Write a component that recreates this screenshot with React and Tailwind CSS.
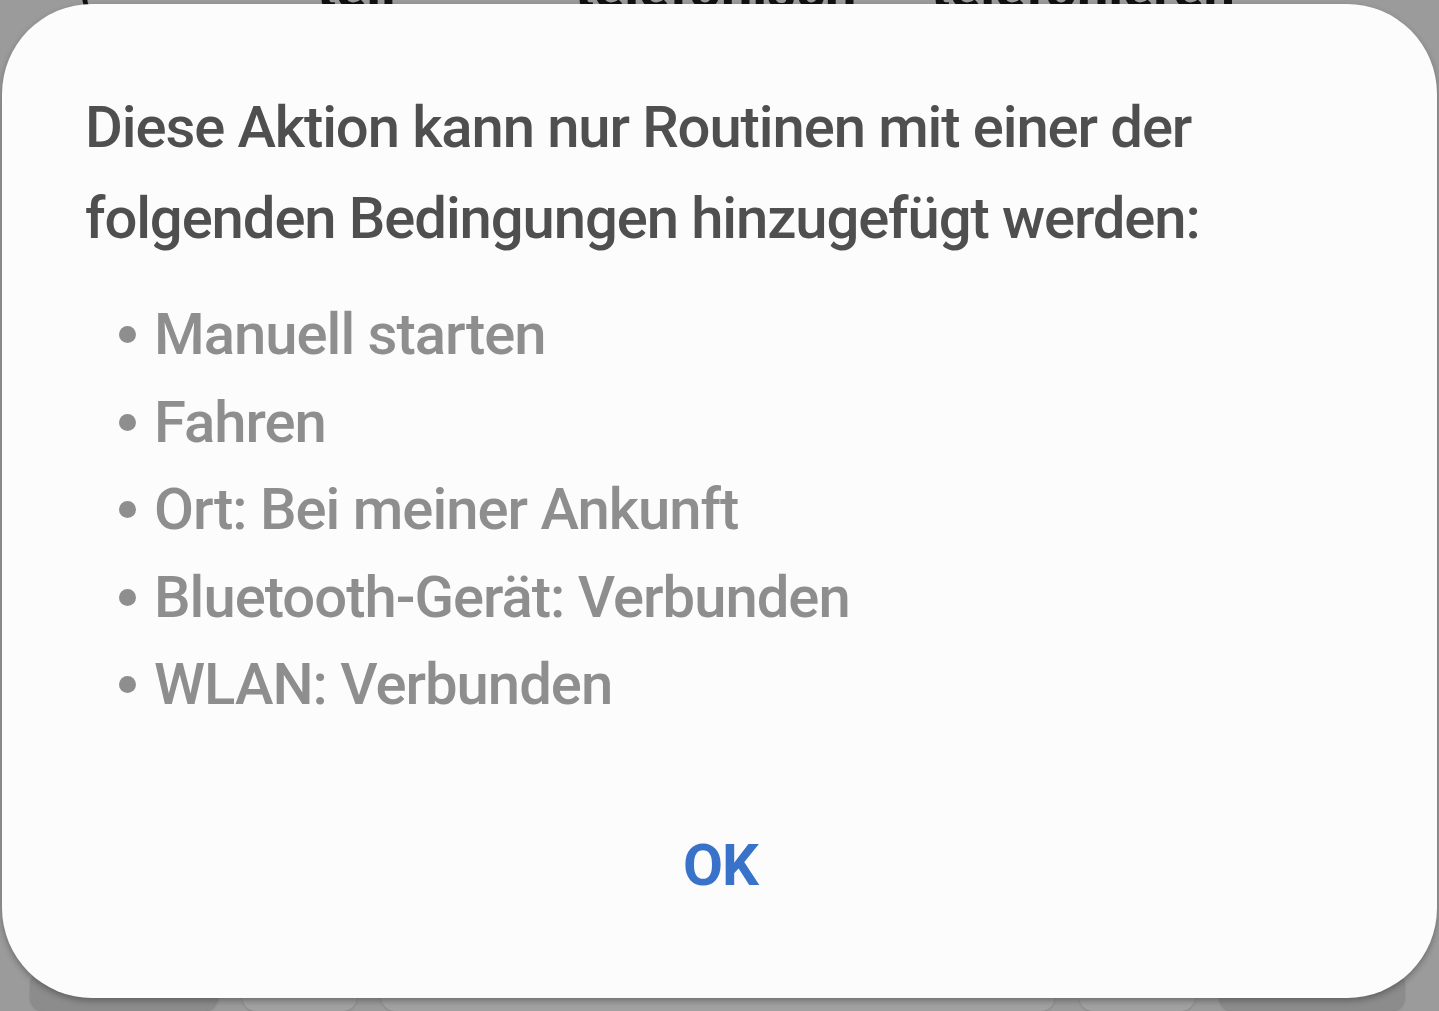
import React from "react";

const items = [
  "Manuell starten",
  "Fahren",
  "Ort: Bei meiner Ankunft",
  "Bluetooth-Gerät: Verbunden",
  "WLAN: Verbunden",
];

export default function App() {
  return (
    <div className="relative w-[1439px] h-[1011px] overflow-hidden bg-[#9b9b9b] font-['Roboto','Liberation_Sans',sans-serif]">
      {/* background content behind the dialog */}
      <div className="flex h-full flex-col justify-between">
        <div className="relative h-[10px] overflow-hidden">
          <div className="absolute bottom-0 left-0 flex w-full items-end pl-[78px] text-[56px] font-bold leading-none text-[#111]">
            <span className="inline-block w-[239px] translate-y-[7px] font-normal">(</span>
            <span className="inline-block w-[258px] translate-y-[7px]">tell</span>
            <span className="inline-block w-[356px] translate-y-[7px]">telefonisch</span>
            <span className="inline-block translate-y-[7px]">telefonieren</span>
          </div>
        </div>
        <div className="flex h-[40px] items-end gap-[24px] pl-[30px]">
          <div className="h-full w-[188px] rounded-[14px] bg-[#8c8c8c] shadow-[0_1px_2px_rgba(0,0,0,0.15)]" />
          <div className="h-full w-[115px] rounded-[14px] bg-[#a1a1a1] shadow-[0_1px_2px_rgba(0,0,0,0.15)]" />
          <div className="h-full w-[674px] rounded-[14px] bg-[#a1a1a1] shadow-[0_1px_2px_rgba(0,0,0,0.15)]" />
          <div className="h-full w-[116px] rounded-[14px] bg-[#a1a1a1] shadow-[0_1px_2px_rgba(0,0,0,0.15)]" />
          <div className="h-full w-[186px] rounded-[14px] bg-[#8c8c8c] shadow-[0_1px_2px_rgba(0,0,0,0.15)]" />
        </div>
      </div>

      {/* dialog */}
      <div className="absolute left-[2px] top-[4px] flex h-[994px] w-[1435px] flex-col rounded-[90px] bg-[#fcfcfc] pl-[83px] pt-[78px] shadow-[0_3px_6px_rgba(0,0,0,0.3)]">
        <p className="text-[58px] font-medium leading-[91px] tracking-[-1.1px] text-[#4f4f4f]">
          Diese Aktion kann nur Routinen mit einer der
          <br />
          folgenden Bedingungen hinzugefügt werden:
        </p>
        <ul className="mt-[27px] flex flex-col text-[58px] font-medium leading-[87.5px] tracking-[-1px] text-[#8e8e8e]">
          {items.map((t) => (
            <li key={t} className="flex items-center">
              <span className="ml-[34px] mr-[18px] inline-block h-[17px] w-[17px] rounded-full bg-[#8e8e8e]" />
              <span>{t}</span>
            </li>
          ))}
        </ul>
        <div className="mt-auto mb-[104px] flex justify-center pr-[81px]">
          <span className="text-[58px] font-bold leading-none tracking-[-1px] text-[#3872c9]">OK</span>
        </div>
      </div>
    </div>
  );
}
